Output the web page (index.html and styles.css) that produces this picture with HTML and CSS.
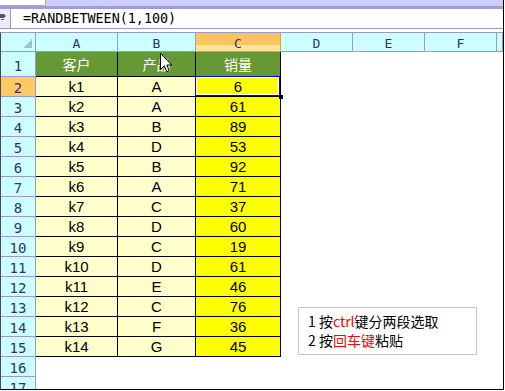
FILE: index.html
```
<!DOCTYPE html>
<html>
<head>
<meta charset="utf-8">
<link rel="stylesheet" href="styles.css">
</head>
<body>
<div class="app">
  <div class="titlebar"><div class="namebox"></div></div>
  <div class="fbar">
    <div class="fx"><svg width="6" height="9" viewBox="0 0 6 9"><path d="M0 2h4l2 2-2 2H0zM1 7h3v1H1z" fill="#556"/></svg></div>
    <div class="formula">=RANDBETWEEN(1,100)</div>
  </div>
  <div class="sheet">
    <div class="row hdr">
      <div class="corner"><span class="tri"></span></div>
      <div class="ch">A</div><div class="ch">B</div><div class="ch act">C</div><div class="ch">D</div><div class="ch">E</div><div class="ch">F</div><div class="ch"></div>
    </div>
    <div class="row r1">
      <div class="rh">1</div>
      <div class="t gr">客户</div><div class="t gr">产品</div><div class="t gr">销量</div><div></div><div></div><div></div><div></div>
    </div>
    <div class="row"><div class="rh act">2</div><div class="t cr">k1</div><div class="t cr">A</div><div class="t yl sel">6</div><div></div><div></div><div></div><div></div></div>
    <div class="row"><div class="rh">3</div><div class="t cr">k2</div><div class="t cr">A</div><div class="t yl">61</div><div></div><div></div><div></div><div></div></div>
    <div class="row"><div class="rh">4</div><div class="t cr">k3</div><div class="t cr">B</div><div class="t yl">89</div><div></div><div></div><div></div><div></div></div>
    <div class="row"><div class="rh">5</div><div class="t cr">k4</div><div class="t cr">D</div><div class="t yl">53</div><div></div><div></div><div></div><div></div></div>
    <div class="row"><div class="rh">6</div><div class="t cr">k5</div><div class="t cr">B</div><div class="t yl">92</div><div></div><div></div><div></div><div></div></div>
    <div class="row"><div class="rh">7</div><div class="t cr">k6</div><div class="t cr">A</div><div class="t yl">71</div><div></div><div></div><div></div><div></div></div>
    <div class="row"><div class="rh">8</div><div class="t cr">k7</div><div class="t cr">C</div><div class="t yl">37</div><div></div><div></div><div></div><div></div></div>
    <div class="row"><div class="rh">9</div><div class="t cr">k8</div><div class="t cr">D</div><div class="t yl">60</div><div></div><div></div><div></div><div></div></div>
    <div class="row"><div class="rh">10</div><div class="t cr">k9</div><div class="t cr">C</div><div class="t yl">19</div><div></div><div></div><div></div><div></div></div>
    <div class="row"><div class="rh">11</div><div class="t cr">k10</div><div class="t cr">D</div><div class="t yl">61</div><div></div><div></div><div></div><div></div></div>
    <div class="row"><div class="rh">12</div><div class="t cr">k11</div><div class="t cr">E</div><div class="t yl">46</div><div></div><div></div><div></div><div></div></div>
    <div class="row"><div class="rh">13</div><div class="t cr">k12</div><div class="t cr">C</div><div class="t yl">76</div><div></div><div></div><div></div><div></div></div>
    <div class="row"><div class="rh">14</div><div class="t cr">k13</div><div class="t cr">F</div><div class="t yl">36</div><div></div><div></div><div></div><div></div></div>
    <div class="row"><div class="rh">15</div><div class="t cr">k14</div><div class="t cr">G</div><div class="t yl">45</div><div></div><div></div><div></div><div></div></div>
    <div class="row"><div class="rh">16</div><div></div><div></div><div></div><div></div><div></div><div></div><div></div></div>
    <div class="row"><div class="rh">17</div><div></div><div></div><div></div><div></div><div></div><div></div><div></div></div>
  </div>
  <div class="note">
    <div>1 按<span class="red">ctrl</span>键分两段选取</div>
    <div>2 按<span class="red">回车键</span>粘贴</div>
  </div>
  <svg class="cursor" width="13" height="21" viewBox="0 0 13 21"><path d="M0.5 0.5V16.5L4.3 12.8L6.8 18.8L9.2 17.8L6.8 12H11.8Z" fill="#fff" stroke="#000" stroke-width="1"/></svg>
</div>
</body>
</html>
```
FILE: styles.css
```
* { box-sizing: border-box; }
html, body { margin: 0; padding: 0; background: #fff; }
.app {
  position: relative;
  width: 504px;
  height: 390px;
  border-right: 1px solid #000;
  border-bottom: 1px solid #000;
  overflow: hidden;
  background: #fff;
}
.titlebar {
  height: 9px;
  background: #CCCCFF;
  border-bottom: 3px solid #9E9ED6;
}
.namebox {
  width: 46px;
  height: 6px;
  background: #fff;
  border-bottom: 1px solid #B0B0B0;
  border-right: 1px solid #B0B0B0;
}
.fbar {
  display: flex;
  height: 20px;
  border-bottom: 1px solid #9999CC;
  margin-bottom: 3px;
}
.fx {
  width: 11px;
  background: #ECECF8;
  border-right: 1px solid #9999CC;
  padding: 3px 0 0 0;
}
.fx svg { display: block; }
.formula {
  flex: 1;
  padding-left: 12px;
  font-family: "DejaVu Sans Mono", monospace;
  font-size: 13.4px;
  line-height: 19px;
  color: #000;
}
.sheet {
  border-left: 1px solid #4a4a5a;
  border-top: 1px solid #9999CC;
}
.row {
  display: grid;
  grid-template-columns: 35px 82px 78px 85px 72px 72px 72px 1fr;
  height: 20px;
}
.row.hdr { height: 19px; }
.row.r1 { height: 25px; }
.row > div {
  display: flex;
  align-items: center;
  justify-content: center;
}
.corner, .ch, .rh {
  background: #CCFFFF;
  border-right: 1px solid #9999CC;
  border-bottom: 1px solid #9999CC;
  font-family: "DejaVu Sans Mono", monospace;
  color: #333366;
}
.corner { position: relative; }
.tri {
  position: absolute;
  right: 3px;
  bottom: 3px;
  width: 9px;
  height: 9px;
  background: linear-gradient(135deg, transparent 50%, #9FC6C6 50%);
}
.ch {
  font-size: 13px;
  padding-top: 3px;
}
.ch.act {
  background: linear-gradient(#F9C462 0, #F9C462 68%, #FFE596 68%);
  border-right-color: #E0A040;
  border-bottom-color: #E0A040;
}
.rh {
  font-size: 14px;
  padding-top: 3px;
}
.rh.act { background: #FFC966; }
.t {
  border-right: 1px solid #000;
  border-bottom: 1px solid #000;
  font-family: "Liberation Sans", Arial, sans-serif;
  font-size: 15px;
  color: #000;
}
.gr {
  background: #669933;
  color: #fff;
  font-family: "Noto Sans CJK SC", sans-serif;
  font-size: 14px;
}
.cr { background: #FFFFCC; }
.yl { background: #FFFF00; }
.sel { position: relative; }
.sel::after {
  content: "";
  position: absolute;
  left: -1px;
  top: -1px;
  right: 0;
  bottom: 0;
  border: 1px solid #0000FF;
  box-shadow: inset 0 0 0 1px #fff;
}
.sel::before {
  content: "";
  position: absolute;
  right: -3px;
  bottom: -3px;
  width: 4px;
  height: 4px;
  background: #000;
  z-index: 2;
}
.note {
  position: absolute;
  left: 298px;
  top: 307px;
  width: 179px;
  height: 48px;
  border: 1px solid #C8C8C8;
  background: #fff;
  padding: 4px 0 0 9px;
  font-family: "Noto Sans CJK SC", sans-serif;
  font-size: 14px;
  line-height: 19px;
  color: #000;
}
.red { color: #FF0000; }
.cursor {
  position: absolute;
  left: 160px;
  top: 53px;
}
```
